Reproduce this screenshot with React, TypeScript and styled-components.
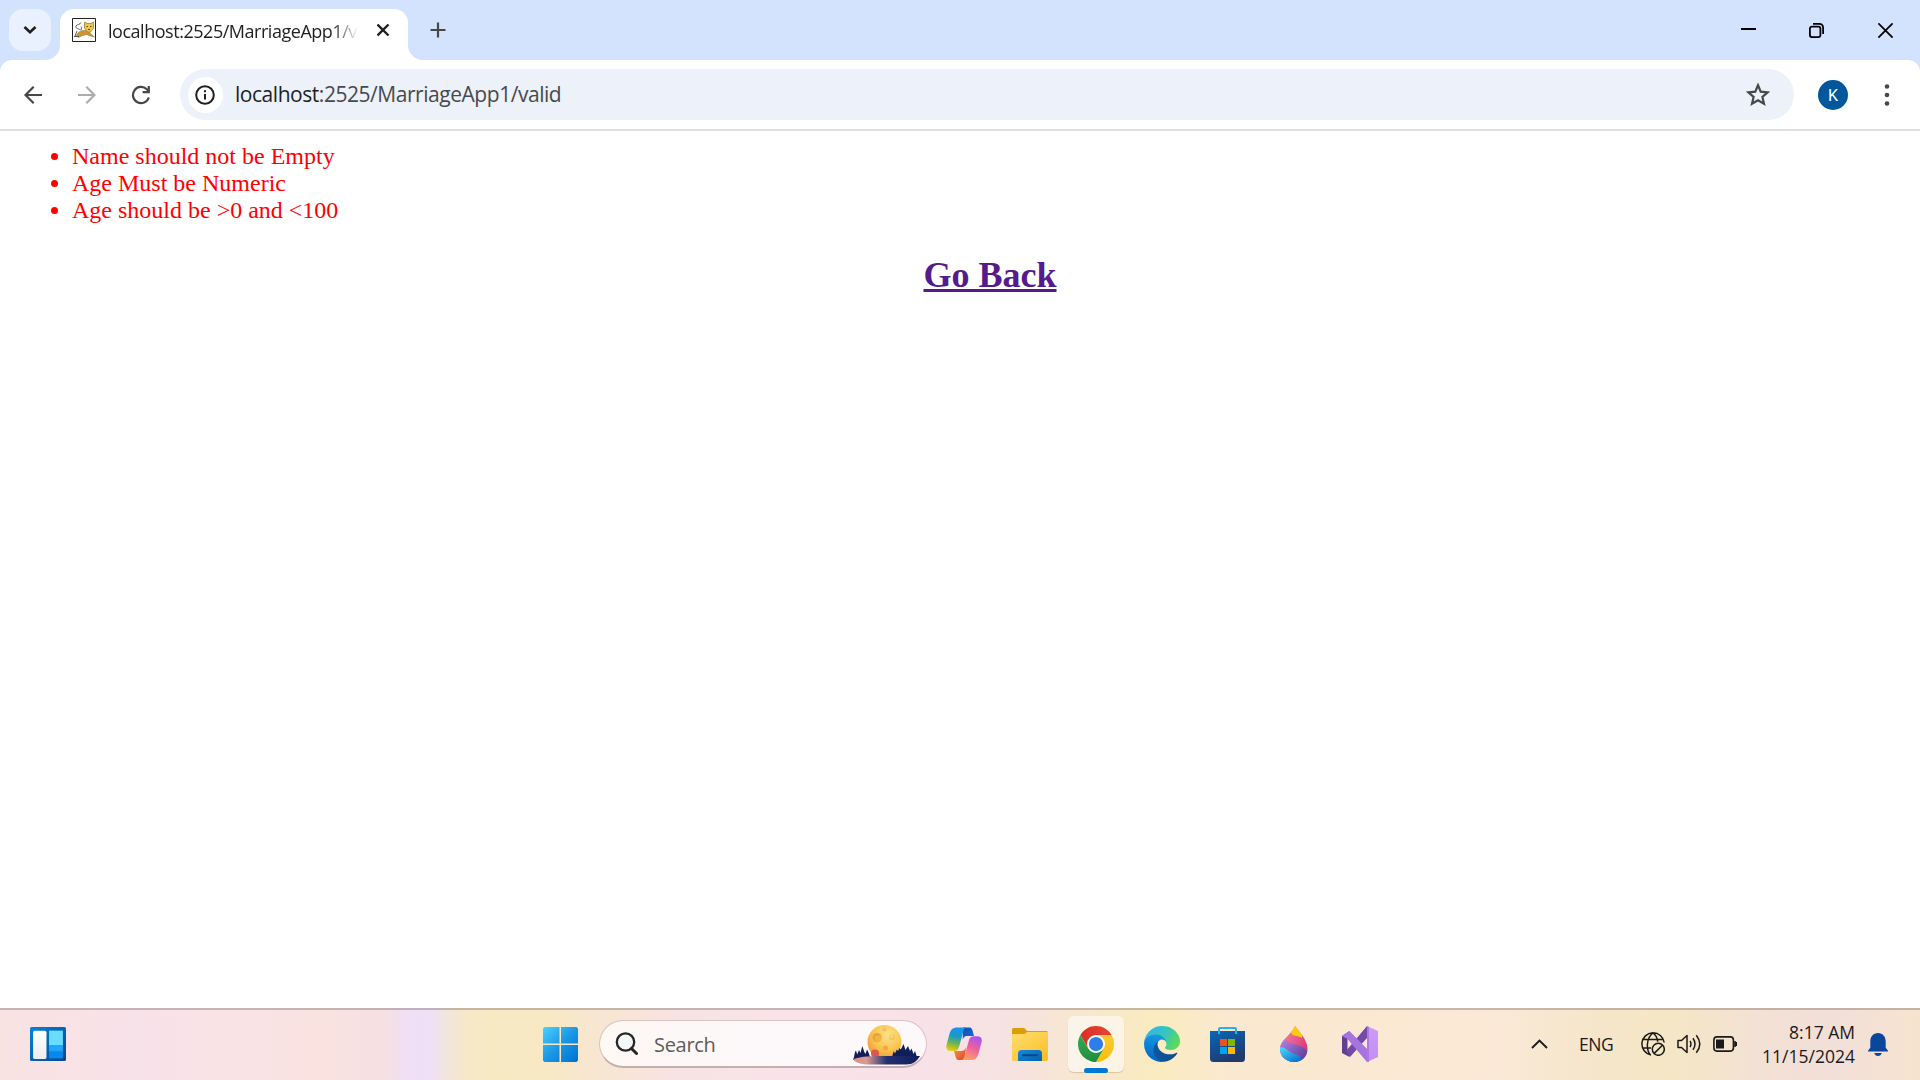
import React from 'react';
import styled, { createGlobalStyle } from 'styled-components';

const GlobalStyle = createGlobalStyle`
  * { box-sizing: border-box; }
  body { margin: 0; background: #fff; overflow: hidden; }
  svg { display: block; flex: none; }
`;

const ui = `'Open Sans', 'Noto Sans', sans-serif`;

const Screen = styled.div`
  width: 1920px;
  height: 1080px;
  display: flex;
  flex-direction: column;
  background: #fff;
  font-family: ${ui};
`;

const TabStrip = styled.header`
  height: 60px;
  flex: none;
  display: flex;
  align-items: flex-start;
  padding: 9px 0 0 9px;
  background: #d3e3fd;
`;

const TabSearch = styled.button`
  width: 42px;
  height: 42px;
  padding: 0;
  border: 0;
  border-radius: 14px;
  background: #e9f1fe;
  display: grid;
  place-items: center;
`;

const Tab = styled.div`
  position: relative;
  width: 348px;
  height: 51px;
  margin-left: 9px;
  padding: 0 0 9px 12px;
  display: flex;
  align-items: center;
  background: #fff;
  border-radius: 14px 14px 0 0;
  &::before, &::after {
    content: '';
    position: absolute;
    bottom: 0;
    width: 15px;
    height: 15px;
  }
  &::before { left: -15px; background: radial-gradient(circle at 0 0, transparent 14.5px, #fff 15.5px); }
  &::after { right: -15px; background: radial-gradient(circle at 100% 0, transparent 14.5px, #fff 15.5px); }
`;

const TabTitle = styled.span`
  width: 250px;
  margin: 2px 0 0 12px;
  overflow: hidden;
  white-space: nowrap;
  font-size: 18px;
  line-height: 26px;
  letter-spacing: -0.47px;
  color: #1f1f1f;
  mask-image: linear-gradient(90deg, #000 225px, transparent 250px);
`;

const TabClose = styled.div`
  margin-left: 19px;
`;

const NewTab = styled.div`
  margin: 13px 0 0 22px;
`;

const WindowControls = styled.div`
  margin-left: auto;
  display: flex;
`;

const WindowButton = styled.div`
  width: 69px;
  height: 42px;
  display: grid;
  place-items: center;
`;

const ToolbarBack = styled.div`
  flex: none;
  height: 71px;
  background: #d3e3fd;
`;

const Toolbar = styled.nav`
  height: 71px;
  display: flex;
  align-items: center;
  padding: 0 6px;
  background: #fff;
  border-radius: 12px 12px 0 0;
  border-bottom: 2px solid #dfdfdf;
`;

const NavButton = styled.div`
  width: 54px;
  height: 54px;
  display: grid;
  place-items: center;
`;

const AddressBar = styled.div`
  width: 1614px;
  height: 51px;
  margin-left: 12px;
  padding: 0 24px 0 8px;
  display: flex;
  align-items: center;
  border-radius: 26px;
  background: #ecf1fa;
`;

const SiteInfo = styled.div`
  width: 35px;
  height: 36px;
  padding-right: 1px;
  border-radius: 18px;
  background: #fff;
  display: grid;
  place-items: center;
`;

const Url = styled.span`
  flex: 1;
  margin: -1px 0 0 12px;
  font-size: 21px;
  line-height: 30px;
  letter-spacing: -0.46px;
  color: #474a4d;
  b { font-weight: 400; color: #1f1f1f; }
`;

const Avatar = styled.div`
  width: 30px;
  height: 30px;
  margin-left: 24px;
  border-radius: 50%;
  background: #01579b;
  color: #fff;
  font-family: Roboto, sans-serif;
  font-size: 16px;
  line-height: 31px;
  text-align: center;
`;

const MenuButton = styled.div`
  margin-left: auto;
  width: 54px;
  display: grid;
  place-items: center;
`;

const Page = styled.main`
  flex: 1;
  padding: 12px;
  font-family: 'Liberation Serif', 'Times New Roman', serif;
  font-size: 24px;
  line-height: 27px;
`;

const ErrorList = styled.ul`
  margin: 0;
  padding-left: 60px;
  color: #f00;
`;

const Heading = styled.h2`
  margin: 31px 0;
  font-size: 36px;
  line-height: 41px;
  text-align: center;
`;

const BackLink = styled.a`
  color: #551a8b;
  text-decoration: underline;
`;

const Taskbar = styled.footer`
  height: 72px;
  flex: none;
  display: flex;
  align-items: center;
  border-top: 2px solid rgba(80, 70, 65, 0.3);
  background: linear-gradient(90deg, #f8e3e1 0, #f8e2ea 135px, #f9e3e5 227px, #f9e2df 328px, #f5e0e4 385px,
    #f0dff7 410px, #efe0f6 430px, #f2e5de 446px, #f6e8c8 466px, #f7eac3 490px, #f7e9c3 540px, #f7e6d2 600px,
    #f7e3e2 670px, #f8e3e8 760px, #f8e2e8 940px, #f6e3df 1020px, #f8e8ca 1100px, #faebc0 1160px, #fae9d0 1230px,
    #fae8d2 1330px, #fae9d6 1500px, #f5e6cc 1590px, #f5e7c5 1670px, #f2e1d5 1760px, #f2dfd8 1840px, #f7e4cf 1920px);
  background-origin: border-box;
`;

const WidgetsZone = styled.div`
  width: 527px;
  padding-left: 30px;
  margin-top: -2px;
`;

const TaskSlot = styled.div`
  width: 66px;
  height: 66px;
  margin-top: -2px;
  display: grid;
  place-items: center;
`;

const ActiveTile = styled.div`
  position: relative;
  width: 56px;
  height: 56px;
  border-radius: 6px;
  background: rgba(255, 255, 255, 0.55);
  box-shadow: 0 1px 1px rgba(120, 90, 50, 0.25);
  display: grid;
  place-items: center;
  &::after {
    content: '';
    position: absolute;
    left: 16px;
    bottom: -1px;
    width: 24px;
    height: 5px;
    border-radius: 3px;
    background: #0078d4;
  }
`;

const SearchBox = styled.div`
  width: 328px;
  height: 48px;
  margin: -2px 4px 0 6px;
  padding: 0 5px 0 15px;
  display: flex;
  align-items: center;
  border-radius: 24px;
  border: 1px solid rgba(150, 110, 115, 0.28);
  border-bottom: 2px solid rgba(130, 100, 105, 0.42);
  background: rgba(255, 255, 255, 0.74);
  background-clip: padding-box;
`;

const SearchLabel = styled.span`
  flex: 1;
  margin: 2px 0 0 16px;
  font-size: 20px;
  line-height: 28px;
  letter-spacing: -0.3px;
  color: #5f5b5b;
`;

const Tray = styled.div`
  margin: -2px 0 0 auto;
  padding-right: 32px;
  display: flex;
  align-items: center;
  color: #1b1a19;
`;

const Language = styled.span`
  width: 36px;
  margin: 0 26px 0 31px;
  font-size: 17.5px;
  line-height: 24px;
  letter-spacing: -0.5px;
  white-space: nowrap;
`;

const Status = styled.div`
  display: flex;
  align-items: center;
  gap: 12px;
`;

const Clock = styled.div`
  width: 103px;
  margin: -1px 13px 0 15px;
  font-size: 17.500px;
  line-height: 24px;
  letter-spacing: 0;
  text-align: right;
  white-space: nowrap;
`;

const stroke = { fill: 'none', stroke: 'currentColor' } as const;

const Tomcat = () => (
  <svg width="24" height="24" viewBox="0 0 24 24">
    <path d="M.5.5h23v23H.5z" fill="#fff" stroke="#222" />
    <path d="M4.500 18c1-4 4-5.500 8-5.500l3 0 3.500 3.500 3.500 3-4-1-4-1.500-4 1-4 2z" fill="#cf962b" stroke="#8a6a2c" strokeWidth=".5" />
    <path d="M12.500 4l2.500 1.500h4L21.500 4v6.500L18.500 14h-3L12.500 10z" fill="#f0c356" stroke="#a2812f" strokeWidth=".8" />
    <path d="M14.500 8.500h1.500M18 8.500h1.500M16 11.500h2" stroke="#5e491c" />
    <path d="M8.500 12C6 10.500 3 10 4 8s4-1 5-3.500M5 13l-2 5M9 8.500c1.500 1 0 2 0 3.500M2 18.500h5" fill="none" stroke="#565b60" />
  </svg>
);

const WidgetsIcon = () => (
  <svg width="36" height="34" viewBox="0 0 35 33">
    <defs>
      <linearGradient id="wa" x2="1" y2="1"><stop stopColor="#0085dc" /><stop offset="1" stopColor="#0c4488" /></linearGradient>
      <linearGradient id="wb" x2="0" y2="1"><stop stopColor="#fff" /><stop offset="1" stopColor="#ececec" /></linearGradient>
    </defs>
    <rect width="35" height="33" rx="1.500" fill="url(#wa)" />
    <rect x="3" y="3.500" width="13" height="27.500" rx="1.500" fill="url(#wb)" />
    <path d="M18.500 3.500H32V18H18.500z" fill="#69dcff" />
    <path d="M18.500 18H32v6H18.500z" fill="#1fa5fb" />
    <path d="M18.500 24H32v6.500H18.500z" fill="#0788ee" />
  </svg>
);

const StartIcon = () => (
  <svg width="36" height="36" viewBox="0 0 36 36">
    <defs>
      <linearGradient id="st" x2="35" y2="35" gradientUnits="userSpaceOnUse">
        <stop stopColor="#4bd0fd" /><stop offset=".5" stopColor="#1b97e4" /><stop offset="1" stopColor="#0070d2" />
      </linearGradient>
    </defs>
    <g transform="translate(1 1)">
      <path d="M1.500 0h15v16.500H0v-15zM18 0h15.500L35 1.500v15H18zM0 18h16.500v17h-15L0 33.500zM18 18h17v15.500L33.500 35H18z" fill="url(#st)" />
    </g>
  </svg>
);

const MoonIcon = () => (
  <svg width="68" height="42" viewBox="0 -2 68 42">
    <defs>
      <radialGradient id="mo" cx=".6" cy=".3" r=".8"><stop stopColor="#ffe08a" /><stop offset=".55" stopColor="#f9c44e" /><stop offset="1" stopColor="#ee8a3c" /></radialGradient>
      <linearGradient id="gr"><stop stopColor="#e08f7c" /><stop offset=".2" stopColor="#d99b94" /><stop offset=".5" stopColor="#26306f" /><stop offset="1" stopColor="#101c5c" /></linearGradient>
    </defs>
    <circle cx="31.500" cy="17" r="17" fill="url(#mo)" />
    <circle cx="24" cy="12.500" r="4.500" fill="#e5a431" />
    <circle cx="25" cy="13.500" r="3.300" fill="#efb443" />
    <circle cx="39" cy="12" r="3" fill="#f2c058" /><circle cx="38.500" cy="11.300" r="2.200" fill="#fad473" />
    <circle cx="31.500" cy="4.500" r="2" fill="#f2c05a" /><circle cx="32.500" cy="23" r="2.500" fill="#f5a545" />
    <circle cx="22" cy="28.500" r="4" fill="#dd5847" />
    <path d="M0 35l1-3 1-5 1-1.500 1.200 4L6 25l1.500 3 1.800-7 2 6 1.200 2 1.500-4.500 1.700 3.500 2 6v1z" fill="#101e5a" />
    <path d="M39 32l1.800-6 1.200 2.500 1.800-4 1.200 1.500 1.500-3 1.300 1.500L50.500 19l2 6 2.500-4 2 5 1.500-2.500L60.500 29l1.500-3 2 6z" fill="#101e5a" />
    <path d="M0 34.500C8 31 20 31 32 31h35c-3 5-7 8.500-14 8.500H17C8 39.500 3 38 0 34.500z" fill="url(#gr)" />
  </svg>
);

const CopilotIcon = () => (
  <svg width="36" height="34" viewBox="0 0 36 34">
    <defs>
      <linearGradient id="ca" x1=".5" x2=".3" y2="1"><stop stopColor="#1794ea" /><stop offset=".35" stopColor="#1998cb" /><stop offset=".65" stopColor="#63b458" /><stop offset="1" stopColor="#f2cc08" /></linearGradient>
      <linearGradient id="cb" x1=".7" x2=".3" y2="1"><stop stopColor="#a855ee" /><stop offset=".5" stopColor="#f0629a" /><stop offset="1" stopColor="#ffa45c" /></linearGradient>
      <linearGradient id="cc" x2="1" y2="1"><stop stopColor="#124ab5" /><stop offset="1" stopColor="#1870df" /></linearGradient>
      <linearGradient id="cd" x2="1" y2="1"><stop stopColor="#fb9c3c" /><stop offset="1" stopColor="#dd4335" /></linearGradient>
    </defs>
    <path d="M17 .5h6.500c2 0 2.800 2 3.300 4l1.200 4.500h-7c-2.300 0-3.500 1-4.300 4z" fill="url(#cc)" />
    <path d="M19 33h-6.500c-2 0-2.600-2-3-3.500L8 24h7c2.300 0 4-1 4.800-4z" fill="url(#cd)" />
    <path d="M11 .5h10c-2 0-3 1.500-3.700 4L13 20c-.9 3-2.500 4-5 4H5c-3.800 0-5.500-2.500-4.400-6.500l3-11C4.800 2.500 7 .5 11 .5z" fill="url(#ca)" />
    <path d="M25 33H15c2 0 2.800-1.500 3.500-4l4.500-16c.9-3 2.500-3.800 5-3.800h3c4 0 5.500 2.300 4.500 6.300l-3 11C31.300 31 29 33 25 33z" fill="url(#cb)" />
  </svg>
);

const FolderIcon = () => (
  <svg width="36" height="33" viewBox="0 0 36 33">
    <defs>
      <linearGradient id="fa" x2=".8" y2="1"><stop stopColor="#ffdd70" /><stop offset="1" stopColor="#fcc02a" /></linearGradient>
      <linearGradient id="fb" x2="1" y2="1"><stop stopColor="#168bdd" /><stop offset="1" stopColor="#065fac" /></linearGradient>
    </defs>
    <path d="M0 1.500Q0 0 1.500 0H11c2 0 2.500 1 4 3h19.500Q36 3 36 4.500V10H0z" fill="#dd9c08" />
    <path d="M0 6h11c2 0 3-1 4-2h21v27.500q0 1.500-1.500 1.500h-33Q0 33 0 31.500z" fill="url(#fa)" />
    <path d="M6 33v-7.500Q6 22 9.500 22h17q3.500 0 3.500 3.500V33z" fill="url(#fb)" />
    <path d="M11 27.300h14" stroke="#074886" strokeWidth="2" strokeLinecap="round" />
  </svg>
);

const ChromeIcon = () => (
  <svg width="36" height="36" viewBox="0 0 48 48">
    <defs>
      <linearGradient id="ha" x2="1"><stop stopColor="#d93025" /><stop offset="1" stopColor="#ea4335" /></linearGradient>
      <linearGradient id="hb" x1=".8" x2=".2" y2="1"><stop stopColor="#fcc934" /><stop offset="1" stopColor="#fbbc04" /></linearGradient>
      <linearGradient id="hc" x1=".6" y1="1" x2=".2"><stop stopColor="#1e8e3e" /><stop offset="1" stopColor="#34a853" /></linearGradient>
    </defs>
    <path d="M24 12h20.780A24 24 0 0 0 3.220 12L13.610 30z" fill="url(#ha)" />
    <path d="M34.390 30L24 48A24 24 0 0 0 44.780 12H24z" fill="url(#hb)" />
    <path d="M13.610 30L3.220 12A24 24 0 0 0 24 48l10.390-18z" fill="url(#hc)" />
    <circle cx="24" cy="24" r="12" fill="#fff" />
    <circle cx="24" cy="24" r="9.500" fill="#2f7de9" />
  </svg>
);

const EdgeIcon = () => (
  <svg width="36" height="36" viewBox="0 0 256 256">
    <defs>
      <linearGradient id="ea" x1="0" x2="1"><stop stopColor="#0c59a4" /><stop offset="1" stopColor="#114a8b" /></linearGradient>
      <linearGradient id="eb" x1=".6" y1="0" x2=".5" y2="1"><stop stopColor="#1b9de2" /><stop offset=".5" stopColor="#0b7fd4" /><stop offset="1" stopColor="#0664b8" /></linearGradient>
      <linearGradient id="ec" x1="0" y1=".3" x2="1" y2=".7"><stop stopColor="#35b4ec" /><stop offset=".5" stopColor="#33c5c0" /><stop offset="1" stopColor="#62dc50" /></linearGradient>
    </defs>
    <path d="M231 190.500a93.700 93.700 0 0 1-10.500 4.700 101.900 101.900 0 0 1-35.900 6.400c-47.300 0-88.500-32.500-88.500-74.300a31.500 31.500 0 0 1 16.400-27.300c-42.800 1.800-53.800 46.400-53.800 72.500 0 73.900 68.100 81.400 82.800 81.400 7.900 0 19.800-2.300 27-4.600l1.300-.4a128.300 128.300 0 0 0 66.600-52.800 4 4 0 0 0-5.400-5.600z" fill="url(#ea)" />
    <path d="M105.700 241.400a79.200 79.200 0 0 1-22.700-21.300 80.700 80.700 0 0 1 29.500-120c3.200-1.500 8.500-4.100 15.600-4a32.400 32.400 0 0 1 25.700 13 31.900 31.900 0 0 1 6.300 18.700c0-.2 24.500-79.600-80-79.600C36.200 48.200.1 89.800.1 126.400a130.200 130.200 0 0 0 12.100 56 128 128 0 0 0 156.400 67.100 75.500 75.500 0 0 1-62.800-8z" fill="url(#eb)" />
    <path d="M152.300 148.900c-.8 1-3.300 2.500-3.300 5.700 0 2.600 1.700 5.200 4.800 7.300 14.400 10.100 41.700 8.700 41.800 8.700a59.600 59.600 0 0 0 30.300-8.300 61.400 61.400 0 0 0 30.400-52.900c.3-22.400-8-37.300-11.300-43.900C223.800 23.900 177.700 0 127.600 0A128 128 0 0 0 0 126.100c.5-36.500 36.800-66 80-66 3.500 0 23.500.3 42 10.100 16.300 8.600 24.900 18.900 30.800 29.200 6.200 10.700 7.300 24.100 7.300 29.500 0 5.300-2.700 13.300-7.800 20z" fill="url(#ec)" />
  </svg>
);

const StoreIcon = () => (
  <svg width="36" height="36" viewBox="0 -1 36 36">
    <defs>
      <linearGradient id="sa" x2=".5" y2="1"><stop stopColor="#0669ba" /><stop offset="1" stopColor="#21396b" /></linearGradient>
    </defs>
    <path d="M0 4h35v27.500q0 3.500-3.500 3.500h-28Q0 35 0 31.500z" fill="url(#sa)" />
    <path d="M9 7V2q0-1 1-1h15q1 0 1 1v5" fill="none" stroke="#28b1ee" strokeWidth="2" />
    <path d="M10 12h7v7h-7z" fill="#f25022" /><path d="M18 12h7v7h-7z" fill="#7fba00" />
    <path d="M10 20h7v7h-7z" fill="#00a4ef" /><path d="M18 20h7v7h-7z" fill="#ffb900" />
  </svg>
);

const PaintIcon = () => (
  <svg width="28" height="36" viewBox="0 0 28 36">
    <defs>
      <clipPath id="dr"><path d="M15 0c3 5 12.500 13 12.500 22.500C27.500 31 21.500 36 14 36S0 30.500 0 23C0 14 12 8 15 0z" /></clipPath>
      <linearGradient id="pa" x2="1" y2=".6"><stop stopColor="#f58ba8" /><stop offset="1" stopColor="#dd3675" /></linearGradient>
      <linearGradient id="pb" x2="1" y2=".8"><stop stopColor="#b985e6" /><stop offset="1" stopColor="#5a3c97" /></linearGradient>
      <linearGradient id="pc" x2=".8" y2="1"><stop stopColor="#50dcfa" /><stop offset="1" stopColor="#0872cf" /></linearGradient>
    </defs>
    <g clipPath="url(#dr)">
      <path d="M0 0h28v36H0z" fill="url(#pa)" />
      <path d="M10 0h12v12c-5-3-10-1-11-6z" fill="#fccb08" />
      <path d="M0 12l5 1.500c4 6 19 4 23 12.500v10H0z" fill="url(#pb)" />
      <path d="M0 21c5 0 7 3 12 6 5 2 9 2 9 6v3H0z" fill="url(#pc)" />
    </g>
  </svg>
);

const VisualStudioIcon = () => (
  <svg width="36" height="36" viewBox="0 0 36 36">
    <defs><linearGradient id="va" x2="0" y2="1"><stop stopColor="#cf9bf7" /><stop offset="1" stopColor="#c18df2" /></linearGradient></defs>
    <path d="M0 10l7.500-5v6L5.500 13v11l2 1v6L0 27z" fill="#60408f" />
    <path d="M4 25L25 0v12L8 31z" fill="#7449a8" />
    <path d="M0 10l7.500-5L27 25v11h-2L5.500 13z" fill="#a673df" />
    <path d="M25 0l11 5v26l-11 5z" fill="url(#va)" />
    <path d="M25 0l2 1v34l-2 1z" fill="#ad78e4" />
  </svg>
);

const apps = [CopilotIcon, FolderIcon, ChromeIcon, EdgeIcon, StoreIcon, PaintIcon, VisualStudioIcon];
const errors = ['Name should not be Empty', 'Age Must be Numeric', 'Age should be >0 and <100'];

export default function App() {
  return (
    <Screen>
      <GlobalStyle />
      <TabStrip>
        <TabSearch aria-label="Search tabs">
          <svg width="14" height="10" viewBox="0 0 14 10"><path d="M1.500 2L7 7.300 12.500 2" fill="none" stroke="#1f1f1f" strokeWidth="2.600" /></svg>
        </TabSearch>
        <Tab>
          <Tomcat />
          <TabTitle>localhost:2525/MarriageApp1/valid</TabTitle>
          <TabClose>
            <svg width="13" height="13" viewBox="0 0 13 13"><path d="M.5.5l11 11M11.500.5L.5 11.500" stroke="#1f1f1f" strokeWidth="2.300" /></svg>
          </TabClose>
        </Tab>
        <NewTab>
          <svg width="16" height="16" viewBox="0 0 16 16"><path d="M8 .5v15M.5 8h15" stroke="#474747" strokeWidth="2.200" /></svg>
        </NewTab>
        <WindowControls>
          <WindowButton><svg width="17" height="15" viewBox="0 0 17 15"><path d="M2 6h15" stroke="#000" strokeWidth="2" /></svg></WindowButton>
          <WindowButton>
            <svg width="15" height="15" viewBox="0 0 15 15" fill="none" stroke="#000" strokeWidth="1.800">
              <rect x=".9" y="3.600" width="10.500" height="10.500" rx="2" /><path d="M4 .9h6q4.100 0 4.100 4.100v6" />
            </svg>
          </WindowButton>
          <WindowButton><svg width="15" height="15" viewBox="0 0 15 15"><path d="M.4.4l14.200 14.200M14.600.4L.4 14.600" stroke="#000" strokeWidth="1.800" /></svg></WindowButton>
        </WindowControls>
      </TabStrip>

      <ToolbarBack>
        <Toolbar>
          <NavButton>
            <svg width="18" height="18" viewBox="0 0 18 18"><path d="M18 9H2M9.700 .8L1.500 9l8.200 8.200" fill="none" stroke="#474747" strokeWidth="2.200" /></svg>
          </NavButton>
          <NavButton>
            <svg width="18" height="18" viewBox="0 0 18 18"><path d="M0 9h16M8.300 .8L16.500 9l-8.200 8.200" fill="none" stroke="#adadad" strokeWidth="2.200" /></svg>
          </NavButton>
          <NavButton>
            <svg width="20" height="20" viewBox="0 0 20 20">
              <path d="M17.800 12.500A8.100 8.100 0 1 1 15.800 4.300L17.500 6" fill="none" stroke="#474747" strokeWidth="2.200" />
              <path d="M18.900 .9v7.300h-7.300V6h5.100V.9z" fill="#474747" />
            </svg>
          </NavButton>
          <AddressBar>
            <SiteInfo>
              <svg width="20" height="20" viewBox="0 0 20 20">
                <circle cx="10" cy="10" r="8.800" fill="none" stroke="#1f1f1f" strokeWidth="2" />
                <path d="M10 9v5.500M10 5.300v2" stroke="#1f1f1f" strokeWidth="2" />
              </svg>
            </SiteInfo>
            <Url><b>localhost</b>:2525/MarriageApp1/valid</Url>
            <svg width="24" height="24" viewBox="0 0 24 24">
              <path d="M12 2.200l2.700 6.500 7 .6-5.300 4.600 1.600 6.900L12 17.200l-6 3.600 1.600-6.900-5.300-4.600 7-.6z" fill="none" stroke="#474747" strokeWidth="2.200" />
            </svg>
          </AddressBar>
          <Avatar>K</Avatar>
          <MenuButton>
            <svg width="6" height="22" viewBox="0 0 6 22" fill="#474747"><circle cx="3" cy="2.500" r="2.300" /><circle cx="3" cy="11" r="2.300" /><circle cx="3" cy="19.500" r="2.300" /></svg>
          </MenuButton>
        </Toolbar>
      </ToolbarBack>

      <Page>
        <ErrorList>
          {errors.map((e) => <li key={e}>{e}</li>)}
          <Heading><BackLink>Go Back</BackLink></Heading>
        </ErrorList>
      </Page>

      <Taskbar>
        <WidgetsZone><WidgetsIcon /></WidgetsZone>
        <TaskSlot><StartIcon /></TaskSlot>
        <SearchBox>
          <svg width="23" height="23" viewBox="0 0 23 23"><circle cx="10.500" cy="10" r="8.700" fill="#f4f6f8" stroke="#262626" strokeWidth="2.300" /><path d="M16.500 16.500l5 5" stroke="#262626" strokeWidth="3" strokeLinecap="round" /></svg>
          <SearchLabel>Search</SearchLabel>
          <MoonIcon />
        </SearchBox>
        {apps.map((Icon, i) => (
          <TaskSlot key={i}>{Icon === ChromeIcon ? <ActiveTile><Icon /></ActiveTile> : <Icon />}</TaskSlot>
        ))}
        <Tray>
          <svg width="17" height="10" viewBox="0 0 17 10" {...stroke} strokeWidth="1.900"><path d="M1 9l7.500-7.500L16 9" /></svg>
          <Language>ENG</Language>
          <Status>
            <svg width="24" height="24" viewBox="0 0 24 24" {...stroke} strokeWidth="1.500">
              <path d="M10 23A11.200 11.200 0 1 1 23.200 10.500M1.500 7.500h21M1 16h9M9.500 23C5 18 5 6 12 .8c3 2.200 4.500 5.500 4.700 9" />
              <circle cx="17.300" cy="17.300" r="6" /><path d="M13.200 21.400l8.200-8.200" />
            </svg>
            <svg width="24" height="20" viewBox="0 0 24 20" {...stroke} strokeWidth="1.500" strokeLinejoin="round">
              <path d="M1 6.500h3.500L10 1.500v17L4.500 13.500H1zM13 7q2 3 0 6M16 4.300q4 5.700 0 11.400M19.300 1.200q7 8.800 0 17.600" />
            </svg>
            <svg width="24" height="16" viewBox="0 0 24 16" {...stroke} strokeWidth="1.600">
              <rect x=".9" y=".9" width="19.500" height="14.200" rx="3" /><path d="M3 3.500h8v9H3z" fill="currentColor" stroke="none" /><path d="M22 5v6M23.200 6v4" />
            </svg>
          </Status>
          <Clock>8:17 AM<br />11/15/2024</Clock>
          <svg width="20" height="23" viewBox="0 0 20 23" fill="#0a469b">
            <path d="M2.300 8.500C2.300 3.500 5.500 0 10 0s7.700 3.500 7.700 8.500v6.200L20 17.700v.8H0v-.8l2.300-3zM6.300 20h7.400c-.5 2-1.800 3-3.700 3s-3.200-1-3.700-3z" />
          </svg>
        </Tray>
      </Taskbar>
    </Screen>
  );
}
